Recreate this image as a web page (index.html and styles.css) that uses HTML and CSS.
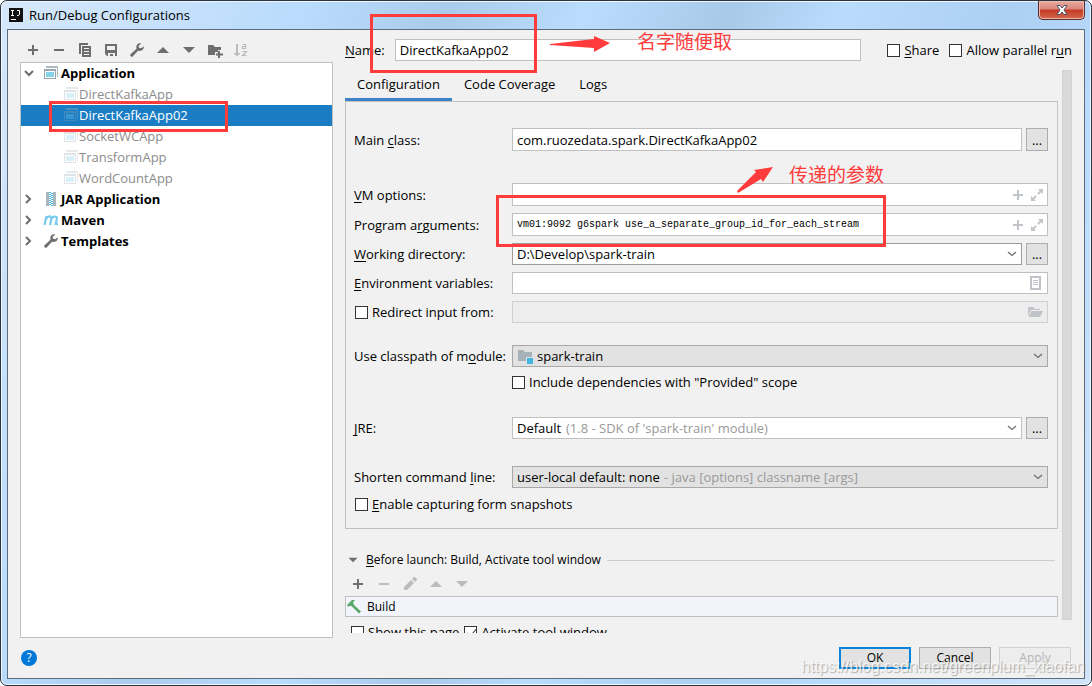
FILE: index.html
```html
<!DOCTYPE html>
<html lang="en">
<head>
<meta charset="utf-8">
<title>Run/Debug Configurations</title>
<link rel="stylesheet" href="styles.css">
</head>
<body>
<svg class="sprite" aria-hidden="true">
  <symbol id="plus" viewBox="0 0 16 16"><path d="M7 3h2v4h4v2H9v4H7V9H3V7h4z"/></symbol>
  <symbol id="minus" viewBox="0 0 16 16"><path d="M3 7h10v2H3z"/></symbol>
  <symbol id="copy" viewBox="0 0 16 16"><path d="M2 1h9v2H4v9H2z"/><path fill-rule="evenodd" d="M5 4h9v11H5zm2 2v1h5V6zm0 3v1h5V9zm0 3v1h5v-1z"/></symbol>
  <symbol id="save" viewBox="0 0 16 16"><path fill-rule="evenodd" d="M2 2h12v12h-2v-3H5v3H4l-2-2zm2 2v4h8V4z"/><path d="M7 12h3v2H7z"/></symbol>
  <symbol id="wrench" viewBox="0 0 16 16"><path d="M14.700 4.300 12.200 6.200 10 5.800 9.700 3.800 12.300 1.500C9.500.7 7 2.500 7.300 5.700L7.500 6.700 1.500 12.300C.3 13.700 2.300 15.600 3.700 14.500L9 8.700C12 9.800 15.300 7.800 14.700 4.300z"/></symbol>
  <symbol id="up" viewBox="0 0 16 16"><path d="M8 5l6 6H2z"/></symbol>
  <symbol id="down" viewBox="0 0 16 16"><path d="M2 5h12l-6 6z"/></symbol>
  <symbol id="newfolder" viewBox="0 0 16 16"><path d="M1 3h5l2 2h6v3h-3v2H8v3H1z"/><path d="M11 9h2v2.500h3v2h-3V16h-2v-2.500H9v-2h2z"/></symbol>
  <symbol id="sort" viewBox="0 0 16 16"><path d="M3 2h2v9h2.500L4 14.500.5 11H3z"/><path d="M9.500 2.500h3v4h-3v-2h3M9.500 9.500h4l-4 4h4" fill="none" stroke="currentColor" stroke-width="1.200"/></symbol>
  <symbol id="app" viewBox="0 0 16 16"><path d="M3 1h12v11h-1V3H3z" fill="#aeb9c0"/><path fill-rule="evenodd" d="M1 4h12v10H1zm1 2v7h10V6z" fill="#9aa7b0"/><path d="M3 7h8v5H3z" fill="#82d2ec"/></symbol>
  <symbol id="jar" viewBox="0 0 16 16"><path d="M3 1h3v14H3zM10 1h3v14h-3z" fill="#aab5bc"/><path d="M6 1h2v1H6zm2 1h2v1H8zM6 3h2v1H6zm2 1h2v1H8zM6 5h2v1H6zm2 1h2v1H8zM6 7h2v1H6zm2 1h2v1H8zM6 9h2v1H6zm2 1h2v1H8zm-2 1h2v1H6zm2 1h2v1H8zm-2 1h2v1H6zm2 1h2v1H8z" fill="#4ab7dc"/></symbol>
  <symbol id="maven" viewBox="0 0 16 16"><path d="M1.500 13 3.500 4M3 7C4.700 3.700 9 3.500 8.300 7L7 13M8 7.500C10 3.700 14.600 3.500 13.800 7L12.700 12H15" fill="none" stroke="#78cbea" stroke-width="2.200"/></symbol>
  <symbol id="right" viewBox="0 0 16 16"><path d="M5 4l4 4-4 4" fill="none" stroke="currentColor" stroke-width="2"/></symbol>
  <symbol id="open" viewBox="0 0 16 16"><path d="M4 6l4 4 4-4" fill="none" stroke="currentColor" stroke-width="2"/></symbol>
  <symbol id="chevron" viewBox="0 0 16 16"><path d="M4 6l4 3.500L12 6" fill="none" stroke="currentColor" stroke-width="1.300"/></symbol>
  <symbol id="expand" viewBox="0 0 16 16"><path d="M9 2h5v5l-1.800-1.800L9.500 7.800 8.200 6.500l2.600-2.700zM2 9l1.800 1.800 2.700-2.600 1.300 1.300-2.600 2.700L7 14H2z"/></symbol>
  <symbol id="doc" viewBox="0 0 16 16"><path fill-rule="evenodd" d="M3 1h11v14H3zm2 2v10h7V3z"/><path d="M6 5h5v1H6zm0 2h5v1H6zm0 2h5v1H6z"/></symbol>
  <symbol id="folderopen" viewBox="0 0 16 16"><path d="M1 3h5l2 2h5v1H4l-3 6z"/><path d="M4.500 7H16l-3 6H1.500z"/></symbol>
  <symbol id="module" viewBox="0 0 16 16"><path d="M1 2h5l2 2h7v5H9v4H1z" fill="#a6b1b8"/><path d="M10 10h6v6h-6z" fill="#40b6e0"/></symbol>
  <symbol id="pencil" viewBox="0 0 16 16"><path d="M2 11l7-7 3 3-7 7H2zM10 3l2-2h1l2 2v1l-2 2z"/></symbol>
  <symbol id="hammer" viewBox="0 0 16 16"><path d="M1 6 6 1h3L7 3.500 8 6l7 6.500-2 2L6 7.500 4 6.500 2.500 8z"/></symbol>
</svg>

<div class="window">
  <header class="titlebar">
    <svg class="logo" viewBox="0 0 14 14" aria-hidden="true"><path d="M0 0h14v14H0z"/><path d="M2 2.500h3M2 7.500h3M3.500 2.500v5M8 2.500h2.500v4q0 1-2.500 1M2 11.500h5" fill="none" stroke="#fff"/></svg>
    <h1 class="title">Run/Debug Configurations</h1>
    <button class="close" aria-label="Close"><svg viewBox="0 0 12 10"><path d="M1 .5h3L6 3 8 .5h3L8 5l3 4.500H8L6 7 4 9.500H1L4 5z"/></svg></button>
  </header>

  <div class="client">
    <div class="main">
      <section class="side">
        <div class="tools">
          <button class="tool" aria-label="Add"><svg><use href="#plus"/></svg></button>
          <button class="tool" aria-label="Remove"><svg><use href="#minus"/></svg></button>
          <button class="tool" aria-label="Copy"><svg><use href="#copy"/></svg></button>
          <button class="tool" aria-label="Save"><svg><use href="#save"/></svg></button>
          <button class="tool" aria-label="Edit templates"><svg><use href="#wrench"/></svg></button>
          <button class="tool" aria-label="Move up"><svg><use href="#up"/></svg></button>
          <button class="tool" aria-label="Move down"><svg><use href="#down"/></svg></button>
          <button class="tool" aria-label="New folder"><svg><use href="#newfolder"/></svg></button>
          <button class="tool off" aria-label="Sort" disabled><svg><use href="#sort"/></svg></button>
        </div>
        <ul class="tree" role="tree">
          <li class="node" role="treeitem"><svg class="twist"><use href="#open"/></svg><svg><use href="#app"/></svg>Application</li>
          <li class="node leaf" role="treeitem"><svg><use href="#app"/></svg>DirectKafkaApp</li>
          <li class="node leaf selected" role="treeitem" aria-selected="true"><svg><use href="#app"/></svg>DirectKafkaApp02</li>
          <li class="node leaf" role="treeitem"><svg><use href="#app"/></svg>SocketWCApp</li>
          <li class="node leaf" role="treeitem"><svg><use href="#app"/></svg>TransformApp</li>
          <li class="node leaf" role="treeitem"><svg><use href="#app"/></svg>WordCountApp</li>
          <li class="node" role="treeitem"><svg class="twist"><use href="#right"/></svg><svg><use href="#jar"/></svg>JAR Application</li>
          <li class="node" role="treeitem"><svg class="twist"><use href="#right"/></svg><svg><use href="#maven"/></svg>Maven</li>
          <li class="node" role="treeitem"><svg class="twist"><use href="#right"/></svg><svg class="gray"><use href="#wrench"/></svg>Templates</li>
        </ul>
      </section>

      <section class="editor">
        <div class="namerow">
          <label for="name"><u>N</u>ame:</label>
          <input class="box name" id="name" type="text" value="DirectKafkaApp02">
          <label class="check share"><input type="checkbox"><span><u>S</u>hare</span></label>
          <label class="check"><input type="checkbox"><span>Allow parallel r<u>u</u>n</span></label>
        </div>

        <div class="scroll">
          <div class="content">
            <div class="tabs" role="tablist">
              <button class="tab current" role="tab" aria-selected="true">Configuration</button>
              <button class="tab" role="tab">Code Coverage</button>
              <button class="tab" role="tab">Logs</button>
            </div>
            <div class="panel">
              <div class="group first">
                <div class="row">
                  <label for="main">Main <u>c</u>lass:</label>
                  <input class="box tall" id="main" type="text" value="com.ruozedata.spark.DirectKafkaApp02">
                  <button class="more tall" aria-label="Browse main class">...</button>
                </div>
              </div>
              <div class="group options">
                <div class="row">
                  <label for="vm"><u>V</u>M options:</label>
                  <div class="box tall expandable"><input class="plain" id="vm" type="text"><button class="mini" aria-label="Insert macro"><svg><use href="#plus"/></svg></button><button class="mini" aria-label="Expand"><svg><use href="#expand"/></svg></button></div>
                </div>
                <div class="row">
                  <label for="args">Program a<u>r</u>guments:</label>
                  <div class="box tall expandable"><input class="plain mono" id="args" type="text" value="vm01:9092 g6spark use_a_separate_group_id_for_each_stream"><button class="mini" aria-label="Insert macro"><svg><use href="#plus"/></svg></button><button class="mini" aria-label="Expand"><svg><use href="#expand"/></svg></button></div>
                </div>
                <div class="row">
                  <label for="dir"><u>W</u>orking directory:</label>
                  <div class="box dark"><input class="plain" id="dir" type="text" value="D:\Develop\spark-train"><button class="mini arrow" aria-label="Recent directories"><svg><use href="#chevron"/></svg></button></div>
                  <button class="more" aria-label="Browse directory">...</button>
                </div>
                <div class="row">
                  <label for="env"><u>E</u>nvironment variables:</label>
                  <div class="box"><input class="plain" id="env" type="text"><button class="mini" aria-label="Edit variables"><svg><use href="#doc"/></svg></button></div>
                </div>
                <div class="row">
                  <label class="check inset"><input type="checkbox"><span>Redirect input from:</span></label>
                  <div class="box disabled"><input class="plain" type="text" aria-label="Redirect input from" disabled><button class="mini" aria-label="Choose file" disabled><svg><use href="#folderopen"/></svg></button></div>
                </div>
              </div>
              <div class="group module">
                <div class="row">
                  <label for="module-select">Use classpath of m<u>o</u>dule:</label>
                  <div class="box combo"><svg class="modicon"><use href="#module"/></svg><select id="module-select"><option>spark-train</option></select><svg class="arrow"><use href="#chevron"/></svg></div>
                </div>
                <div class="row">
                  <span></span>
                  <label class="check"><input type="checkbox"><span>Include dependencies with "Provided" scope</span></label>
                </div>
              </div>
              <div class="group jre">
                <div class="row">
                  <label for="jre"><u>J</u>RE:</label>
                  <div class="box"><select id="jre"><option>Default</option></select><span class="hint">(1.8 - SDK of 'spark-train' module)</span><svg class="arrow"><use href="#chevron"/></svg></div>
                  <button class="more" aria-label="Browse JRE">...</button>
                </div>
              </div>
              <div class="group shorten">
                <div class="row">
                  <label for="short">Shorten command <u>l</u>ine:</label>
                  <div class="box combo"><select id="short"><option>user-local default: none</option></select><span class="hint">- java [options] classname [args]</span><svg class="arrow"><use href="#chevron"/></svg></div>
                </div>
                <label class="check inset"><input type="checkbox"><span><u>E</u>nable capturing form snapshots</span></label>
              </div>
            </div>

            <div class="launch">
              <button class="launchhead"><svg><use href="#down"/></svg><span><u>B</u>efore launch: Build, Activate tool window</span></button>
              <span class="rule"></span>
            </div>
            <div class="tools low">
              <button class="tool" aria-label="Add task"><svg><use href="#plus"/></svg></button>
              <button class="tool off" aria-label="Remove task" disabled><svg><use href="#minus"/></svg></button>
              <button class="tool off" aria-label="Edit task" disabled><svg><use href="#pencil"/></svg></button>
              <button class="tool off" aria-label="Task up" disabled><svg><use href="#up"/></svg></button>
              <button class="tool off" aria-label="Task down" disabled><svg><use href="#down"/></svg></button>
            </div>
            <div class="task"><svg><use href="#hammer"/></svg>Build</div>
            <div class="after">
              <label class="check"><input type="checkbox"><span>Show this page</span></label>
              <label class="check"><input type="checkbox" checked><span>Activate tool window</span></label>
            </div>
          </div>
          <div class="scrollbar"></div>
        </div>
      </section>
    </div>

    <footer class="footer">
      <button class="help" aria-label="Help">?</button>
      <button class="btn ok">OK</button>
      <button class="btn">Cancel</button>
      <button class="btn" disabled>Apply</button>
    </footer>
  </div>

  <div class="mark mark-tree"></div>
  <div class="mark mark-name"></div>
  <div class="mark mark-args"></div>
  <svg class="pointer pointer-name" viewBox="0 0 60 18"><path d="M0 9 44 4V1l16 7-16 9v-4L0 10z"/></svg>
  <svg class="pointer pointer-args" viewBox="0 0 37 26"><path d="M0 24 19 5 17 3 36 0 26 15 24 12 1 26z"/></svg>
  <p class="note note-name" lang="zh">名字随便取</p>
  <p class="note note-args" lang="zh">传递的参数</p>
  <p class="watermark">https://blog.csdn.net/greenplum_xiaofan</p>
</div>
</body>
</html>
```

FILE: styles.css
```css
* { box-sizing: border-box; }
body {
  margin: 0;
  background: #fff;
  color: #000;
  font: 13px/20px "Open Sans", "Noto Sans", "Noto Sans CJK SC", sans-serif;
}
button, input, select {
  margin: 0;
  padding: 0;
  border: 0;
  border-radius: 0;
  background: none;
  color: inherit;
  font: inherit;
}
svg { flex: none; width: 16px; height: 16px; fill: currentColor; }
.sprite { position: absolute; width: 0; height: 0; }
u { text-underline-offset: 2px; text-decoration-thickness: 1px; }

.window {
  position: relative;
  display: flex;
  flex-direction: column;
  height: 100vh;
  padding: 0 6px 6px;
  border: 1px solid #2c3440;
  border-radius: 7px;
  background: linear-gradient(115deg, #d6e8fa 0, #b9dbfc 22%, #abcbea 32%, #badcfd 42%, #a9c9e8 52%, #b9dbfc 60%, #acd0f2 72%, #badcfd 82%, #d0e4fa 100%);
  box-shadow: inset 0 0 0 1px #eef6ff;
}
.titlebar { display: flex; align-items: center; gap: 6px; height: 28px; padding-left: 2px; }
.logo { width: 14px; height: 14px; fill: #111; }
.title { flex: 1; margin: 0; font-size: 13px; font-weight: 400; }
.close {
  display: flex;
  align-items: center;
  justify-content: center;
  align-self: flex-start;
  width: 47px;
  height: 19px;
  border: 1px solid #5d2a2a;
  border-top: 0;
  border-radius: 0 0 5px 5px;
  background: linear-gradient(#e8aca2 0, #d98478 45%, #c23a22 50%, #d6674f 100%);
  box-shadow: inset 0 0 0 1px #ecb8ae;
}
.close svg { width: 12px; height: 10px; fill: #fff; stroke: #4b5364; overflow: visible; }

.client {
  display: flex;
  flex: 1;
  flex-direction: column;
  min-height: 0;
  padding: 8px 12px 0;
  border: 1px solid #5d6c7c;
  background: #f1f1f1;
}
.main { display: flex; flex: 1; gap: 12px; min-height: 0; }
.side { display: flex; flex: none; flex-direction: column; width: 313px; }
.tools { display: flex; flex: none; align-items: center; gap: 10px; height: 24px; padding-left: 5px; }
.tool { display: flex; color: #6e6e6e; }
.tool.off { color: #bcbcbc; }
.tree { flex: 1; margin: 0; padding: 0; border: 1px solid #c0c0c0; background: #fff; list-style: none; }
.node { display: flex; align-items: center; height: 21px; padding-bottom: 2px; font-weight: 700; }
.node svg { margin-right: 2px; }
.node .twist { margin-right: 6px; color: #6e6e6e; }
.node .gray { color: #6e6e6e; }
.leaf { padding-left: 42px; color: #8c8c8c; font-weight: 400; }
.leaf svg { margin-right: 0; opacity: .3; }
.selected { background: #1a7dc4; color: #fff; }

.editor { display: flex; flex: 1; flex-direction: column; min-width: 0; padding-bottom: 5px; }
.namerow { display: flex; flex: none; align-items: center; gap: 10px; height: 24px; margin-bottom: 8px; }
.box {
  display: flex;
  flex: 1;
  align-items: center;
  min-width: 0;
  height: 22px;
  padding: 0 4px;
  border: 1px solid #c0c0c0;
  background: #fff;
}
.tall { height: 23px; }
.dark { border-color: #9c9c9c; }
.disabled { border-color: #d0d0d0; background: #ededed; }
.combo { border-color: #a8a8a8; background: #e2e2e2; }
.expandable { padding-right: 2px; }
.share { margin-left: 16px; }
.check { display: flex; align-items: center; gap: 4px; white-space: nowrap; }
.inset { padding-left: 1px; }
.check input {
  flex: none;
  position: relative;
  appearance: none;
  width: 13px;
  height: 13px;
  border: 1px solid #333;
  background: #fff;
}
.check input:checked::after {
  content: "";
  position: absolute;
  top: 0;
  left: 4px;
  width: 4px;
  height: 8px;
  border: solid #444;
  border-width: 0 1px 1px 0;
  transform: rotate(40deg);
}

.scroll { display: flex; flex: 1; gap: 4px; min-height: 0; overflow: hidden; }
.content { flex: 1; min-width: 0; }
.scrollbar { width: 10px; margin-bottom: 13px; border: 1px solid #d2d2d2; background: #d9d9d9; }
.tabs { display: flex; height: 31px; }
.tab { padding: 0 12px; border-bottom: 3px solid transparent; }
.current { border-color: #3d82c6; }
.panel { padding: 0 9px 14px 8px; border: 1px solid #c0c0c0; }
.group { display: flex; flex-direction: column; gap: 7px; }
.first { padding-top: 26px; }
.options { padding-top: 32px; }
.module { gap: 5px; padding-top: 22px; }
.jre { padding-top: 25px; }
.shorten { gap: 6px; padding-top: 27px; }
.row { display: flex; align-items: center; }
.row > :first-child { flex: none; width: 158px; }
.more {
  width: 22px;
  height: 22px;
  margin-left: 4px;
  border: 1px solid #adadad;
  background: #e2e2e2;
  line-height: 16px;
}
.more.tall { height: 23px; }
.plain { flex: 1; min-width: 0; height: 18px; outline: 0; }
.mono { font: 10px/18px "Liberation Mono", monospace; }
.mini { display: flex; margin-left: 3px; color: #c0c4c8; }
.arrow { margin-left: auto; color: #6e6e6e; }
.box .arrow { margin-right: -3px; }
select { appearance: none; }
.hint { margin-left: 4px; color: #999; white-space: nowrap; }
.modicon { margin-right: 4px; }

.launch { display: flex; align-items: center; gap: 6px; height: 20px; margin-top: 21px; padding-right: 3px; font-size: 12px; }
.launchhead { display: flex; align-items: center; gap: 5px; }
.launchhead svg { width: 16px; height: 12px; color: #6e6e6e; }
.rule { flex: 1; height: 1px; background: #cdcdcd; }
.low { height: 26px; padding-top: 2px; }
.task { display: flex; align-items: center; gap: 5px; height: 21px; border: 1px solid #c0c0c0; background: #f1f5fb; font-size: 12px; }
.task svg { color: #59a869; }
.after { display: flex; gap: 5px; padding: 5px 6px 0; }

.footer { display: flex; flex: none; align-items: center; gap: 8px; height: 40px; padding-right: 1px; font-size: 12px; }
.help { width: 16px; height: 16px; margin: 0 auto 0 1px; border-radius: 50%; background: #0078d7; color: #fff; line-height: 16px; }
.btn { width: 72px; height: 22px; border: 1px solid #adadad; background: #e2e2e2; line-height: 18px; }
.btn:disabled { border-color: #d0d0d0; background: #ededed; color: #b5b5b5; }
.ok { border: 2px solid #0a83dc; }

.mark { position: absolute; border: 3px solid #ff3b3b; pointer-events: none; }
.mark-tree { top: 100px; left: 48px; width: 179px; height: 31px; }
.mark-name { top: 13px; left: 369px; width: 167px; height: 59px; }
.mark-args { top: 194px; left: 495px; width: 390px; height: 52px; }
.pointer { position: absolute; fill: #ff3b3b; }
.pointer-name { top: 34px; left: 549px; width: 60px; height: 18px; }
.pointer-args { top: 166px; left: 736px; width: 37px; height: 26px; }
.note { position: absolute; margin: 0; color: #ff3b3b; font: 19px/24px "Noto Sans CJK SC", sans-serif; }
.note-name { top: 28px; left: 636px; }
.note-args { top: 161px; left: 788px; }
.watermark {
  position: absolute;
  right: 6px;
  bottom: 8px;
  margin: 0;
  color: rgba(255, 255, 255, .75);
  font: 16px/20px "Liberation Sans", sans-serif;
  text-shadow: 1px 1px 1px rgba(90, 90, 90, .45);
  pointer-events: none;
}
```
